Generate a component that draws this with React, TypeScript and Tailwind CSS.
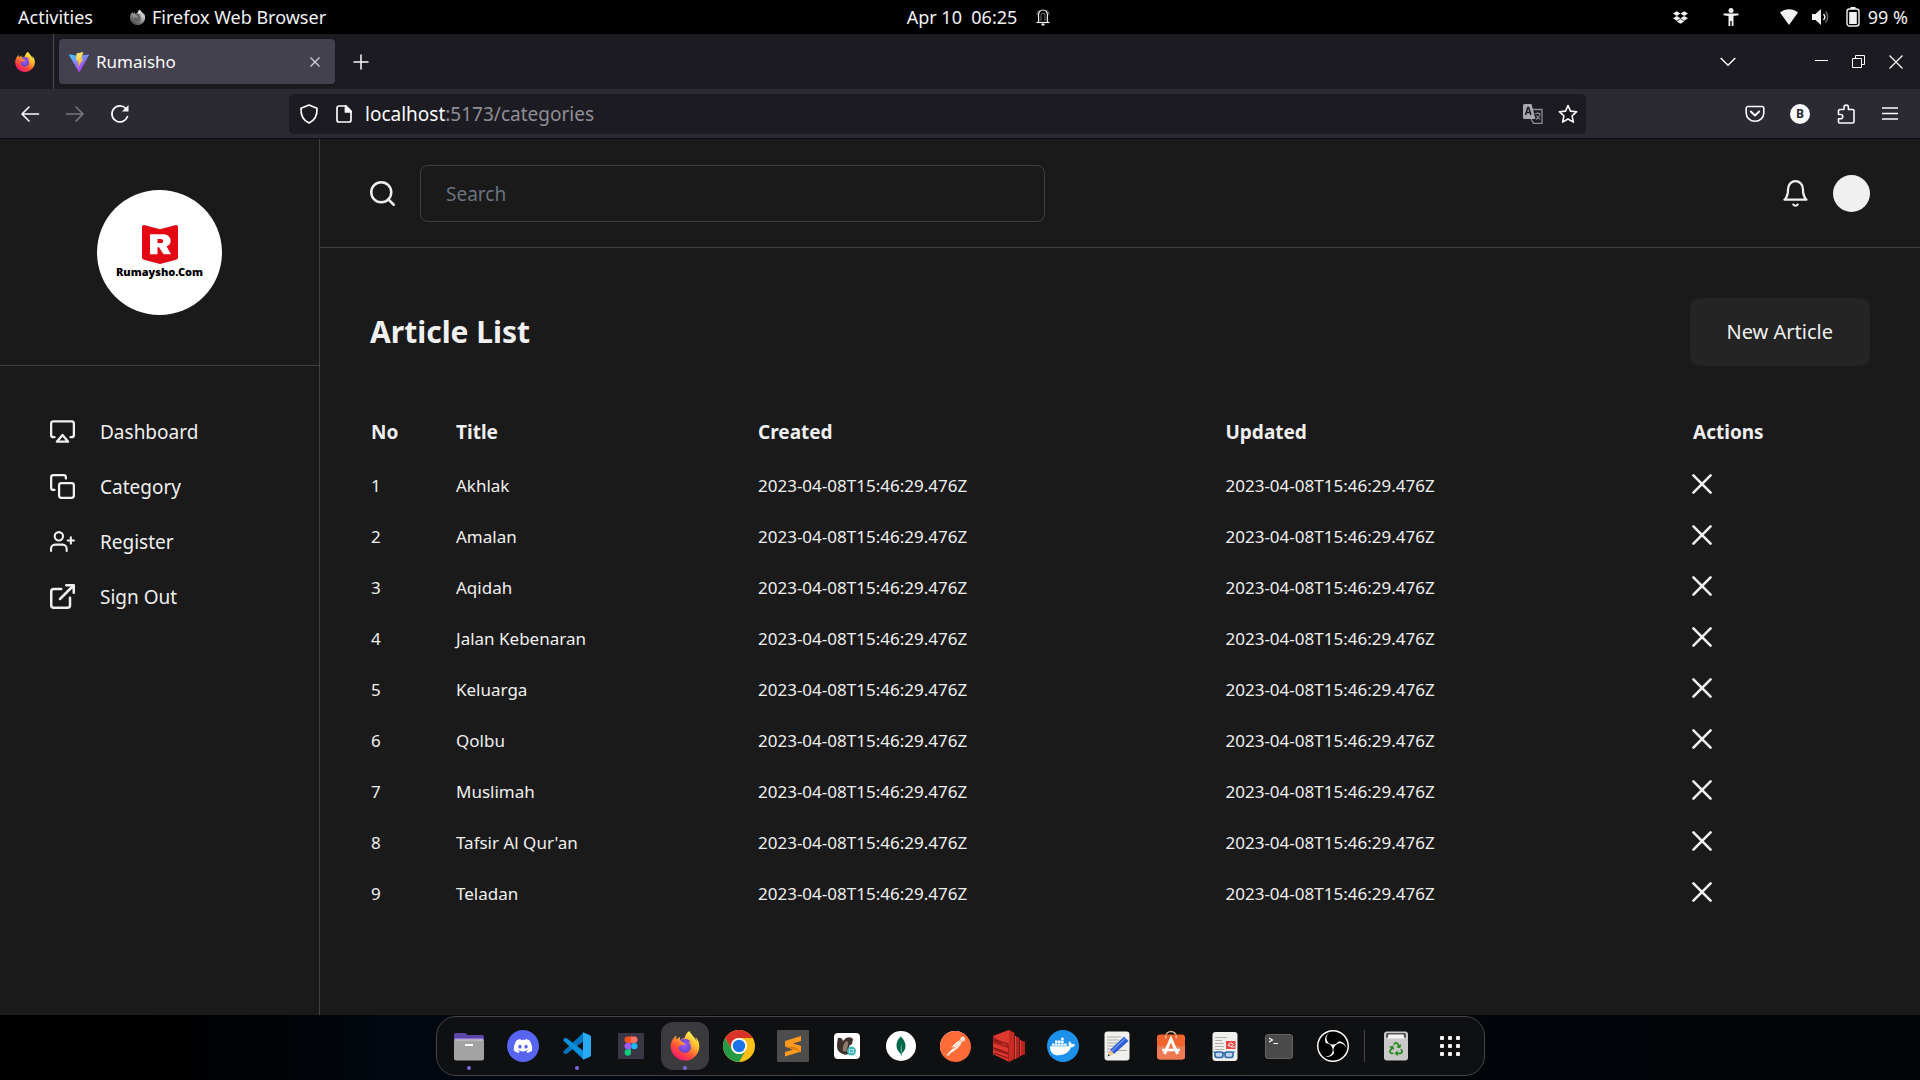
import type { ReactNode } from "react";
import { FaDiscord, FaDocker, FaDropbox, FaFirefoxBrowser, FaRecycle } from "react-icons/fa";
import { SiObsstudio, SiPostman, SiMongodb } from "react-icons/si";

type LineIconProps = { viewBox: string; className: string; children: ReactNode };

function LineIcon({ viewBox, className, children }: LineIconProps) {
  return (
    <svg
      aria-hidden="true"
      viewBox={viewBox}
      className={className}
      fill="none"
      stroke="currentColor"
      strokeWidth="2"
      strokeLinecap="round"
      strokeLinejoin="round"
    >
      {children}
    </svg>
  );
}

function FirefoxLogo({ id, className }: { id: string; className: string }) {
  return (
    <svg aria-hidden="true" viewBox="0 0 32 32" className={className}>
      <defs>
        <linearGradient id={id} x1="0.8" y1="0.1" x2="0.25" y2="0.95">
          <stop offset="0" stopColor="#fff44f" />
          <stop offset="0.35" stopColor="#ffb02e" />
          <stop offset="0.65" stopColor="#ff5634" />
          <stop offset="1" stopColor="#f5156c" />
        </linearGradient>
        <radialGradient id={`${id}-globe`} cx="0.5" cy="0.4" r="0.6">
          <stop offset="0" stopColor="#a05cff" />
          <stop offset="1" stopColor="#4b36b0" />
        </radialGradient>
      </defs>
      <circle cx="15.5" cy="17" r="9" fill={`url(#${id}-globe)`} />
      <FaFirefoxBrowser x="1" y="1" width="30" height="30" size="30" fill={`url(#${id})`} />
    </svg>
  );
}

function ViteLogo() {
  return (
    <svg aria-hidden="true" viewBox="0 0 32 32" className="size-5">
      <defs>
        <linearGradient id="vite-a" x1="0" y1="0" x2="0.6" y2="1">
          <stop offset="0" stopColor="#41d1ff" />
          <stop offset="1" stopColor="#bd34fe" />
        </linearGradient>
        <linearGradient id="vite-b" x1="0.4" y1="0" x2="0.6" y2="1">
          <stop offset="0" stopColor="#ffea83" />
          <stop offset="1" stopColor="#ffa800" />
        </linearGradient>
      </defs>
      <path d="M31.8 5.2 17 31.4a.9.9 0 0 1-1.6 0L.2 5.2a.9.9 0 0 1 1-1.3l14.9 2.6 14.7-2.6a.9.9 0 0 1 1 1.3z" fill="url(#vite-a)" />
      <path d="M23 0 12 2.2l-.8 11.5 3.1-.7-.9 4.5 2.1-.6-1.6 8 9-14-3.4.7z" fill="url(#vite-b)" />
    </svg>
  );
}

function TopBar() {
  return (
    <header className="flex h-[34px] shrink-0 items-center bg-black pr-3 pl-[18px] text-[18px] leading-6 text-[#f2f2f2]">
      <div className="flex flex-1 items-center">
        <button type="button">Activities</button>
        <button type="button" className="ml-9 flex items-center gap-1.5">
          <FirefoxLogo id="fx-menu" className="size-[17px] grayscale" />
          Firefox Web Browser
        </button>
      </div>
      <button type="button" className="flex items-center gap-[18px] pl-8">
        <span className="whitespace-pre">Apr 10  06:25</span>
        <svg aria-hidden="true" viewBox="0 0 16 18" className="h-[18px] w-4" fill="none" stroke="currentColor" strokeWidth="1.2">
          <path d="M3.5 14.5C4 12 3.500 10 3.500 7a4.500 5 0 0 1 9 0c0 3-.5 5 0 7.500" />
          <path d="M6 13V7.500a2 2.500 0 0 1 4 0V13M1.800 7A6 6 0 0 1 4.500 2M14.200 7a6 6 0 0 0-2.700-5" strokeWidth=".7" opacity=".7" />
          <path d="M1.500 14.500h13" />
          <path d="M6.500 16.500h3" strokeWidth="2" />
        </svg>
      </button>
      <div className="flex flex-1 items-center justify-end">
        <FaDropbox className="size-[15px]" aria-hidden="true" />
        <svg aria-hidden="true" viewBox="0 0 16 18" className="ml-[35px] h-[18px] w-4" fill="currentColor">
          <circle cx="8" cy="2.5" r="2.5" />
          <path d="M.5 5.500h15v1.700L10.500 8v10H8.700v-5H7.300v5H5.500V8l-5-.8z" />
        </svg>
        <svg aria-hidden="true" viewBox="0 0 18 16" className="ml-[41px] h-4 w-[18px]" fill="currentColor">
          <path d="M9 16 0 3.500C5-1 13-1 18 3.500z" />
        </svg>
        <svg aria-hidden="true" viewBox="0 0 18 18" className="ml-3.5 size-[18px]" fill="none" stroke="currentColor" strokeWidth="1.5">
          <path d="M0 6h3.500L9 1v16l-5.500-5H0z" fill="currentColor" stroke="none" />
          <path d="M11.500 6a4.500 4.500 0 0 1 0 6" />
          <path d="M13.500 3.500a8 8 0 0 1 0 11" opacity=".45" />
        </svg>
        <svg aria-hidden="true" viewBox="0 0 14 20" className="ml-4 h-5 w-3.5" fill="currentColor">
          <path d="M4.500 0h5v2h-5z" />
          <rect x="1" y="2" width="12" height="17" rx="2.5" fill="none" stroke="currentColor" strokeWidth="1.4" />
          <rect x="3.2" y="5" width="7.6" height="12" />
        </svg>
        <span className="ml-2">99 %</span>
      </div>
    </header>
  );
}

function TabStrip() {
  return (
    <div className="flex h-[55px] shrink-0 items-center bg-[#1c1b22] pr-[17px] text-[#fbfbfe]">
      <div className="flex h-full w-[54px] items-center border-r border-[#4a4951] pl-[14px]">
        <FirefoxLogo id="fx-tab" className="size-[22px]" />
      </div>
      <div className="ml-[5px] flex h-[45px] w-[276px] items-center rounded bg-[#42414d] pr-[13px] pl-2.5 shadow-sm">
        <ViteLogo />
        <span className="ml-[7px] flex-1 text-[17px] leading-6">Rumaisho</span>
        <button type="button" aria-label="Close tab">
          <svg aria-hidden="true" viewBox="0 0 14 14" className="size-3.5" stroke="#cfcfd6" strokeWidth="1.3">
            <path d="m2.500 2.500 9 9M11.500 2.500l-9 9" />
          </svg>
        </button>
      </div>
      <button type="button" aria-label="New tab" className="ml-[18px]">
        <svg aria-hidden="true" viewBox="0 0 16 16" className="size-4" stroke="currentColor" strokeWidth="1.5">
          <path d="M8 .5v15M.5 8h15" />
        </svg>
      </button>
      <div className="flex-1" />
      <button type="button" aria-label="List all tabs">
        <svg aria-hidden="true" viewBox="0 0 16 10" className="h-2.5 w-4" fill="none" stroke="currentColor" strokeWidth="1.5">
          <path d="m.7 1 7.300 7.300L15.300 1" />
        </svg>
      </button>
      <button type="button" aria-label="Minimize" className="ml-[79px]">
        <svg aria-hidden="true" viewBox="0 0 13 13" className="size-[13px]" stroke="currentColor" strokeWidth="1">
          <path d="M0 5.500h13" />
        </svg>
      </button>
      <button type="button" aria-label="Restore" className="ml-6">
        <svg aria-hidden="true" viewBox="0 0 13 13" className="size-[13px]" fill="none" stroke="currentColor" strokeWidth="1">
          <path d="M.5 3.500h9v9h-9zM3.500 3.500v-3h9v9h-3" />
        </svg>
      </button>
      <button type="button" aria-label="Close window" className="ml-6">
        <svg aria-hidden="true" viewBox="0 0 14 14" className="size-3.5" stroke="currentColor" strokeWidth="1.2">
          <path d="m.5.5 13 13M13.500.5l-13 13" />
        </svg>
      </button>
    </div>
  );
}

function NavBar() {
  return (
    <div className="flex h-[50px] shrink-0 items-center border-b border-[#0f0f12] bg-[#2b2a33] pr-[22px] pl-5 text-[#fbfbfe]">
      <button type="button" aria-label="Back">
        <LineIcon viewBox="0 0 20 20" className="size-5">
          <path d="M18.500 10H2M9 3l-7 7 7 7" strokeWidth="1.6" />
        </LineIcon>
      </button>
      <button type="button" aria-label="Forward" disabled className="ml-[25px] text-[#78777f]">
        <LineIcon viewBox="0 0 20 20" className="size-5">
          <path d="M1.500 10H18M11 3l7 7-7 7" strokeWidth="1.6" />
        </LineIcon>
      </button>
      <button type="button" aria-label="Reload" className="ml-[25px]">
        <LineIcon viewBox="0 0 20 20" className="size-5">
          <path d="M17.500 12.500A8 8 0 1 1 15.800 4.500" strokeWidth="1.7" />
          <path d="M18.500 1v6.500H12z" fill="currentColor" stroke="none" />
        </LineIcon>
      </button>
      <div className="ml-[159px] flex h-10 flex-1 items-center rounded-[5px] bg-[#1c1b22] pr-2 pl-[10px]">
        <LineIcon viewBox="0 0 20 20" className="size-5">
          <path d="M10 1 2 4.200c-.3 6 1.500 11.800 8 14.800 6.500-3 8.300-8.800 8-14.800z" strokeWidth="1.7" />
        </LineIcon>
        <svg aria-hidden="true" viewBox="0 0 16 18" className="ml-[17px] h-[18px] w-4" fill="none" stroke="currentColor" strokeWidth="1.7">
          <path d="M3 1h7l5 5v9a2 2 0 0 1-2 2H3a2 2 0 0 1-2-2V3a2 2 0 0 1 2-2z" />
          <path d="M9.500 1v6H15z" fill="currentColor" />
        </svg>
        <div role="textbox" aria-label="Address" tabIndex={0} className="ml-[13px] flex-1 text-[19px] leading-6 text-[#8f8e96]">
          <span className="text-[#fbfbfe]">localhost</span>:5173/categories
        </div>
        <button type="button" aria-label="Translate page">
          <svg aria-hidden="true" viewBox="0 0 20 20" className="size-5">
            <path d="M8 5.500h11V19.300H10.500L8 15" fill="none" stroke="#8d8c93" strokeWidth="1.3" />
            <path d="M1.500 0h7l4 15h-11A1.500 1.500 0 0 1 0 13.500v-12A1.500 1.500 0 0 1 1.500 0z" fill="#a9a8ae" />
            <path d="m2.500 11 2.300-7.500h.8L8 11M3.300 8.500h4" fill="none" stroke="#1c1b22" strokeWidth="1.5" />
            <path d="M12 9.500h5.500M14.800 8v1.500M17 10c-.5 3-2 4.500-4 5.500M13.500 11.500c.8 2 2 3 3.500 4" fill="none" stroke="#8d8c93" strokeWidth="1.1" />
          </svg>
        </button>
        <button type="button" aria-label="Bookmark this page" className="ml-[15px]">
          <LineIcon viewBox="0 0 20 20" className="size-5">
            <path d="m10 1.500 2.500 5.600 6.200.6-4.600 4.200 1.300 6.200L10 15l-5.400 3.100 1.300-6.200L1.300 7.700l6.200-.6z" strokeWidth="1.6" />
          </LineIcon>
        </button>
      </div>
      <button type="button" aria-label="Save to Pocket" className="ml-[159px]">
        <LineIcon viewBox="0 0 20 18" className="h-[18px] w-5">
          <path d="M3 1.500h14a1.800 1.800 0 0 1 1.800 1.800V8a8.800 8.300 0 0 1-17.600 0V3.300A1.800 1.800 0 0 1 3 1.500z" strokeWidth="1.6" />
          <path d="m5.800 6.500 4.200 4 4.200-4" strokeWidth="1.9" />
        </LineIcon>
      </button>
      <button type="button" aria-label="Account" className="ml-[25px] grid size-5 place-items-center rounded-full bg-[#fbfbfe] text-[12px] leading-none font-bold text-[#2b2a33]">
        B
      </button>
      <button type="button" aria-label="Extensions" className="ml-[26px]">
        <LineIcon viewBox="0 0 20 20" className="size-5">
          <path d="M2.500 8V6.700A1.200 1.200 0 0 1 3.700 5.500H8V3.300a2.200 2.200 0 0 1 4.400 0v2.200h4.200A1.400 1.400 0 0 1 18 6.900V17.500a1.500 1.500 0 0 1-1.500 1.500h-13a1 1 0 0 1-1-1v-3.300h2.200a2.100 2.100 0 0 0 0-4.200H2.500z" strokeWidth="1.6" />
        </LineIcon>
      </button>
      <button type="button" aria-label="Open application menu" className="ml-[26px]">
        <svg aria-hidden="true" viewBox="0 0 16 14" className="h-3.5 w-4" stroke="currentColor" strokeWidth="1.5">
          <path d="M0 1h16M0 6.500h16M0 12h16" />
        </svg>
      </button>
    </div>
  );
}

const airplay = (
  <LineIcon viewBox="1 2 22 20" className="h-[23px] w-[25px]">
    <path d="M5 17H4a2 2 0 0 1-2-2V5a2 2 0 0 1 2-2h16a2 2 0 0 1 2 2v10a2 2 0 0 1-2 2h-1" />
    <path d="m12 15 5 6H7z" />
  </LineIcon>
);
const copy = (
  <LineIcon viewBox="1 1 22 22" className="size-[25px]">
    <rect x="9" y="9" width="13" height="13" rx="2" />
    <path d="M5 15H4a2 2 0 0 1-2-2V4a2 2 0 0 1 2-2h9a2 2 0 0 1 2 2v1" />
  </LineIcon>
);
const userPlus = (
  <LineIcon viewBox="0 2 24 20" className="h-[21px] w-[25px]">
    <path d="M16 21v-2a4 4 0 0 0-4-4H5a4 4 0 0 0-4 4v2M20 8v6M23 11h-6" />
    <circle cx="8.5" cy="7" r="4" />
  </LineIcon>
);
const externalLink = (
  <LineIcon viewBox="2 2 20 20" className="size-[25px]">
    <path d="M18 13v6a2 2 0 0 1-2 2H5a2 2 0 0 1-2-2V8a2 2 0 0 1 2-2h6M15 3h6v6M10 14 21 3" />
  </LineIcon>
);

const menu = [
  { label: "Dashboard", icon: airplay },
  { label: "Category", icon: copy },
  { label: "Register", icon: userPlus },
  { label: "Sign Out", icon: externalLink },
];

function SideBar() {
  return (
    <aside className="w-80 shrink-0 border-r border-[#404040]">
      <div className="flex justify-center border-b border-[#404040] pt-[51px] pb-[50px]">
        <div className="flex size-[125px] flex-col items-center justify-center rounded-full bg-white">
          <svg aria-hidden="true" viewBox="0 0 36 42" preserveAspectRatio="none" className="h-[39px] w-9">
            <path d="M2 0 18 4.500 34 0q2 0 2 2v33q0 2-2 2.500L18 42 2 37.500Q0 37 0 35V2Q0 0 2 0z" fill="#e30613" />
            <path fillRule="evenodd" d="M8 10h13c9 0 10 11 3.500 13L29 31.500h-7.500L17 24h-1.500v7.500H8zM15.500 15v4.500H19c3 0 3-4.500 0-4.500z" fill="#fff" />
          </svg>
          <span className="text-[11px] leading-4 font-black text-black">Rumaysho.Com</span>
        </div>
      </div>
      <nav aria-label="Main" className="px-[50px] pt-[38px]">
        <ul>
          {menu.map((item) => (
            <li key={item.label}>
              <a href="#" className="flex h-[55px] items-center gap-[25px] text-[19px] leading-7">
                {item.icon}
                {item.label}
              </a>
            </li>
          ))}
        </ul>
      </nav>
    </aside>
  );
}

const titles = ["Akhlak", "Amalan", "Aqidah", "Jalan Kebenaran", "Keluarga", "Qolbu", "Muslimah", "Tafsir Al Qur'an", "Teladan"];
const stamp = "2023-04-08T15:46:29.476Z";

function ArticleTable() {
  return (
    <table className="mt-[38px] w-full table-fixed text-left">
      <thead>
        <tr className="h-14 text-[19px] leading-7">
          <th scope="col" className="w-[85px] pl-px font-bold">No</th>
          <th scope="col" className="w-[302px] pl-px font-bold">Title</th>
          <th scope="col" className="pl-px font-bold">Created</th>
          <th scope="col" className="pl-px font-bold">Updated</th>
          <th scope="col" className="w-[178px] pl-px font-bold">Actions</th>
        </tr>
      </thead>
      <tbody>
        {titles.map((title, i) => (
          <tr key={title} className="h-[51px] text-[17px] leading-6">
            <td className="pl-px">{i + 1}</td>
            <td className="pl-px">{title}</td>
            <td className="pl-px">{stamp}</td>
            <td className="pl-px">{stamp}</td>
            <td className="pb-1">
              <button type="button" aria-label={`Delete ${title}`} className="block">
                <LineIcon viewBox="5 5 14 14" className="size-5">
                  <path d="M18 6 6 18M6 6l12 12" strokeWidth="1.8" />
                </LineIcon>
              </button>
            </td>
          </tr>
        ))}
      </tbody>
    </table>
  );
}

function Page() {
  return (
    <div className="flex flex-1 bg-[#1a1a1a] text-[#f0f0f0]">
      <SideBar />
      <div className="flex-1">
        <div className="flex items-center border-b border-[#404040] px-[50px] pt-[26px] pb-[25px]">
          <label htmlFor="search" aria-label="Search">
            <LineIcon viewBox="2 2 20 20" className="size-[25px]">
              <circle cx="11" cy="11" r="8" />
              <path d="m21 21-4.350-4.350" />
            </LineIcon>
          </label>
          <input
            id="search"
            type="search"
            placeholder="Search"
            className="ml-[25px] h-[57px] w-[625px] max-w-full rounded-lg border border-[#404040] bg-transparent px-[25px] text-[19px] leading-7 placeholder:text-[#6b7280]"
          />
          <button type="button" aria-label="Notifications" className="ml-auto">
            <LineIcon viewBox="2 1 20 22" className="h-[27px] w-[25px]">
              <path d="M18 8A6 6 0 0 0 6 8c0 7-3 9-3 9h18s-3-2-3-9M13.730 21a2 2 0 0 1-3.460 0" strokeWidth="1.8" />
            </LineIcon>
          </button>
          <button type="button" aria-label="Profile" className="ml-[25px] size-[37px] rounded-full bg-[#f0f0f0]" />
        </div>
        <main className="px-[50px] pt-[50px]">
          <div className="flex items-center justify-between">
            <h1 className="text-[30px] leading-9 font-bold">Article List</h1>
            <button type="button" className="rounded-[10px] bg-[#242424] px-[37px] py-5 text-xl leading-7">
              New Article
            </button>
          </div>
          <ArticleTable />
        </main>
      </div>
    </div>
  );
}

const files = (
  <svg viewBox="0 0 32 32" className="size-8">
    <path d="M1 5a2 2 0 0 1 2-2h9l3 2h14a2 2 0 0 1 2 2v5H1z" fill="#5b46a8" />
    <path d="M2 8h28v4H2z" fill="#8a70d6" />
    <rect x="1" y="9.5" width="30" height="21" rx="2" fill="#a3a3a3" />
    <path d="M1.500 10h29" stroke="#d0d0d0" />
    <path d="M12 15h8" stroke="#fff" strokeWidth="2" />
  </svg>
);
const discord = (
  <span className="grid size-8 place-items-center rounded-full bg-[#5865f2] text-white">
    <FaDiscord className="size-5" />
  </span>
);
const vscode = (
  <svg viewBox="0 0 32 32" className="size-8">
    <path d="M22.500 2.500 2.500 21.200q-.8.8 0 1.600l1.500 1.300q.7.5 1.400 0L28 7z" fill="#0074c1" />
    <path d="m22.500 29.500-20-18.700q-.8-.8 0-1.600L4 7.900q.7-.5 1.400 0L28 25z" fill="#0a8fdd" />
    <path d="M22 2.300 28.500 5q1.500.7 1.500 2v18q0 1.300-1.500 2L22 29.700z" fill="#2aa9f5" />
  </svg>
);
const figma = (
  <svg viewBox="0 0 32 32" className="size-8">
    <path d="M3 3h26v26H3z" fill="#3b3646" />
    <path d="M16 6.500h-3.300a3.200 3.200 0 0 0 0 6.400H16z" fill="#f24e1e" />
    <path d="M16 6.500h3.300a3.200 3.200 0 0 1 0 6.400H16z" fill="#ff7262" />
    <path d="M16 12.900h-3.300a3.200 3.200 0 0 0 0 6.400H16z" fill="#a259ff" />
    <circle cx="19.3" cy="16.1" r="3.2" fill="#1abcfe" />
    <path d="M16 19.300h-3.300a3.200 3.200 0 1 0 3.300 3.200z" fill="#0acf83" />
  </svg>
);
const chrome = (
  <svg viewBox="0 0 32 32" className="size-8">
    <circle cx="16" cy="16" r="16" fill="#fbc116" />
    <path d="M2.150 8A16 16 0 0 1 29.850 8H16a8 8 0 0 0-6.900 12z" fill="#db3329" />
    <path d="M2.150 8A16 16 0 0 0 16 32l6.900-12a8 8 0 0 1-13.800 0z" fill="#259a47" />
    <circle cx="16" cy="16" r="8" fill="#fff" />
    <circle cx="16" cy="16" r="6.2" fill="#1a73e8" />
  </svg>
);
const sublime = (
  <svg viewBox="0 0 32 32" className="size-8">
    <rect width="32" height="32" rx="1" fill="#4d4d4d" />
    <path d="M24 6 8 11v5.500l16 5V16l-8-2.500 8-2.500z" fill="#ff9a1f" />
    <path d="m8 26.500 16-5V16l-9-1.500-7 2 8 3L8 22z" fill="#ff9a1f" />
    <path d="m8 16.500 16 5-6-4.500z" fill="#e07a0c" />
  </svg>
);
const dbeaver = (
  <svg viewBox="0 0 32 32" className="size-8">
    <rect x="3" y="3" width="26" height="26" rx="4" fill="#fff" />
    <path d="M7 8q4-1 5 3l3-3q5-2 7 1l-1 5-3 2 1 7q-4 3-7 1-6-2-6-8 0-4 1-8z" fill="#3d302c" />
    <path d="M15 11q3 0 2 4l-2 7-3-1q-1-5 3-10z" fill="#8f7c6c" />
    <circle cx="20.5" cy="21" r="4.5" fill="#45b5b8" />
    <path d="M18.500 19.500h4v3h-4z" fill="none" stroke="#c8eded" strokeWidth=".8" />
  </svg>
);
const mongo = (
  <span className="grid size-[30px] place-items-center rounded-full bg-white text-[#00684a]">
    <SiMongodb className="size-5" />
  </span>
);
const postman = (
  <span className="grid size-[30px] place-items-center rounded-full bg-white text-[#ff6c37]">
    <SiPostman className="size-[31px]" />
  </span>
);
const redis = (
  <svg viewBox="0 0 32 32" className="size-8">
    <path d="m0 6 16-6 5 3v26l-5 3L0 24z" fill="#a71e1e" />
    <path d="m0 6 16-6v14l-5 1zM0 13l15 5v5L0 17zM0 20l15 5v6L0 24z" fill="#dc382d" />
    <path d="m2 10 13 4M1 18l14 5M1 23l14 5" stroke="#7d1414" strokeWidth="1.2" />
    <path d="m16 0 5.500 3v26L16 32z" fill="#c62b24" />
    <path d="m22.500 6 4 2v19l-4 2z" fill="#b82420" />
    <path d="m27.500 10 4.500 2v12l-4.500 2z" fill="#b82420" />
    <path d="M22.500 6v23M27.500 10v16" stroke="#e2463d" />
  </svg>
);
const docker = (
  <span className="grid size-8 place-items-center rounded-full bg-[#1d91e9] text-white">
    <FaDocker className="size-[25px]" />
  </span>
);
const editor = (
  <svg viewBox="0 0 32 32" className="size-8">
    <rect x="3.5" y="1.5" width="25" height="29" rx="3" fill="#f0f0ee" />
    <path d="M6 7h14M6 10h12M6 13h10M6 16h8M6 19h7M6 22h4M15 20.500h11" stroke="#a9a9a4" strokeWidth="1" />
    <path d="m9 20 14-13.500 4.500 4.500L13 24z" fill="#2f5fd8" />
    <path d="m10.500 21.500 14-13.500" stroke="#6b93f5" strokeWidth="1.6" />
    <path d="m9 20-2.500 6.500L13 24z" fill="#f0c48c" />
    <path d="m7.500 24-1 2.500 2.500-1z" fill="#333" />
  </svg>
);
const software = (
  <svg viewBox="0 0 32 32" className="size-8">
    <path d="M11 6a5 4.500 0 0 1 10 0" fill="none" stroke="#d9b48c" strokeWidth="1.6" />
    <rect x="2" y="4.5" width="28" height="25" rx="3" fill="#f2622c" />
    <path d="M2 16h28v10.500a3 3 0 0 1-3 3H5a3 3 0 0 1-3-3z" fill="#ec7a52" />
    <path d="m9.500 24 6.500-15L22.500 24" fill="none" stroke="#fff" strokeWidth="3" />
    <path d="M7 20h18" stroke="#fff" strokeWidth="2.6" />
    <path d="M11 5.500a5 4.500 0 0 0 0 3M21 5.500a5 4.500 0 0 1 0 3" fill="none" stroke="#f3d9bd" strokeWidth="1.2" />
  </svg>
);
const viewer = (
  <svg viewBox="0 0 32 32" className="size-8">
    <rect x="3.5" y="2" width="25" height="29" rx="3" fill="#efefed" />
    <path d="M6 7.500h12M6 10.500h7M6 13.500h9M6 16.500h9M6 19.500h9" stroke="#b3aea6" strokeWidth="1" />
    <rect x="17" y="11" width="9.5" height="8" fill="#ef4444" />
    <path d="M19 16q1-4 4-3t0 3q-3 1-3-1M22 17h4" fill="none" stroke="#fff" strokeWidth=".9" />
    <rect x="6" y="22" width="8" height="5.5" rx="2" fill="#bcd3ee" stroke="#2c66ad" strokeWidth="1.6" />
    <rect x="16" y="22" width="8" height="5.5" rx="2" fill="#bcd3ee" stroke="#2c66ad" strokeWidth="1.6" />
    <path d="M4.500 22H6m8 1h2m8-1h1.500" stroke="#2c66ad" strokeWidth="1.6" />
  </svg>
);
const terminal = (
  <svg viewBox="0 0 32 32" className="size-8">
    <rect x="2.5" y="4.5" width="27" height="24" rx="2.5" fill="#4a4a4a" stroke="#656565" />
    <path d="m6 8 3.500 2L6 12M10.500 13.500H15" fill="none" stroke="#fff" strokeWidth="1.2" />
  </svg>
);
const obs = (
  <span className="grid size-8 place-items-center rounded-full bg-black text-white">
    <SiObsstudio className="size-8" />
  </span>
);
const trash = (
  <svg viewBox="0 0 32 32" className="size-8">
    <rect x="4" y="1.5" width="24" height="29" rx="3" fill="#c9c9c9" />
    <rect x="6" y="3" width="20" height="5" rx="1.5" fill="#555" />
    <path d="M8.500 4.500h15l1 4h-17z" fill="#f5f5f5" />
    <FaRecycle x="9" y="12" width="14" height="14" size="14" color="#2a8a24" />
  </svg>
);
const appGrid = (
  <svg viewBox="0 0 20 20" className="size-5" fill="#f2f2f2">
    {[0, 8, 16].map((y) => [0, 8, 16].map((x) => <rect key={`${x}-${y}`} x={x} y={y} width="4" height="4" rx="1" />))}
  </svg>
);

type DockApp = { name: string; icon: ReactNode; running?: boolean; active?: boolean };

const apps: DockApp[] = [
  { name: "Files", icon: files, running: true },
  { name: "Discord", icon: discord },
  { name: "Visual Studio Code", icon: vscode, running: true },
  { name: "Figma", icon: figma },
  { name: "Firefox", icon: <FirefoxLogo id="fx-dock" className="size-8" />, running: true, active: true },
  { name: "Chrome", icon: chrome },
  { name: "Sublime Text", icon: sublime },
  { name: "DBeaver", icon: dbeaver },
  { name: "MongoDB Compass", icon: mongo },
  { name: "Postman", icon: postman },
  { name: "Redis Manager", icon: redis },
  { name: "Docker", icon: docker },
  { name: "Text Editor", icon: editor },
  { name: "Ubuntu Software", icon: software },
  { name: "Document Viewer", icon: viewer },
  { name: "Terminal", icon: terminal },
  { name: "OBS Studio", icon: obs },
];

function DockButton({ name, icon, running, active }: DockApp) {
  return (
    <button
      type="button"
      aria-label={name}
      className={`relative grid size-12 place-items-center rounded-xl ${active ? "bg-[#3b3b3d]" : ""}`}
    >
      {icon}
      {running && <span className="absolute bottom-0 left-[22px] size-1 rounded-full bg-[#8067d8]" />}
    </button>
  );
}

function Dock() {
  return (
    <footer className="flex h-[65px] shrink-0 justify-center bg-gradient-to-r from-black via-[#020810] via-20% to-[#010508] pt-px">
      <div className="flex h-[60px] items-center gap-1.5 rounded-[20px] border border-[#454547] bg-[#0f1012] pr-2.5 pl-2">
        {apps.map((app) => (
          <DockButton key={app.name} {...app} />
        ))}
        <span className="mx-px h-8 w-px bg-[#454547]" />
        <DockButton name="Trash" icon={trash} />
        <DockButton name="Show Applications" icon={appGrid} />
      </div>
    </footer>
  );
}

export default function App() {
  return (
    <div className="flex min-h-screen flex-col bg-black font-['Noto_Sans',sans-serif]">
      <TopBar />
      <TabStrip />
      <NavBar />
      <Page />
      <Dock />
    </div>
  );
}
